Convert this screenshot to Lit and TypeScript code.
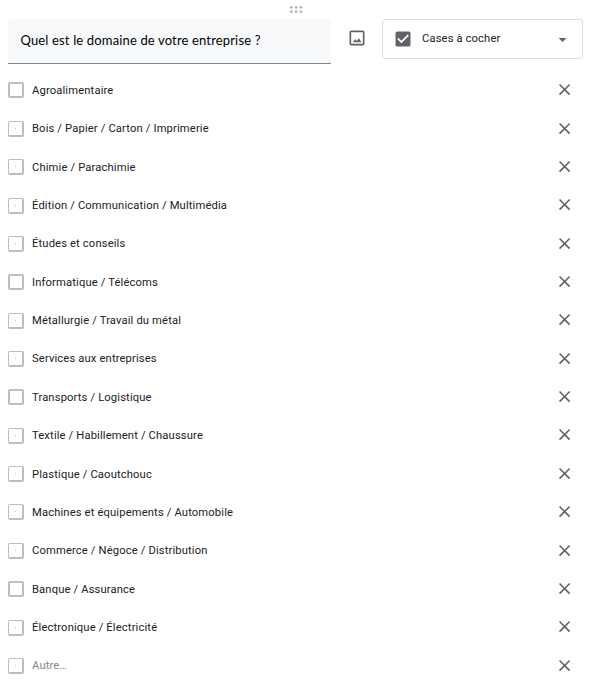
import { LitElement, html, css } from "lit";
import { customElement, property } from "lit/decorators.js";
import { classMap } from "lit/directives/class-map.js";

interface Option {
  label: string;
  dot?: boolean;
  other?: boolean;
}

const OPTIONS: Option[] = [
  { label: "Agroalimentaire" },
  { label: "Bois / Papier / Carton / Imprimerie", dot: true },
  { label: "Chimie / Parachimie", dot: true },
  { label: "Édition / Communication / Multimédia", dot: true },
  { label: "Études et conseils", dot: true },
  { label: "Informatique / Télécoms" },
  { label: "Métallurgie / Travail du métal", dot: true },
  { label: "Services aux entreprises", dot: true },
  { label: "Transports / Logistique" },
  { label: "Textile / Habillement / Chaussure", dot: true },
  { label: "Plastique / Caoutchouc", dot: true },
  { label: "Machines et équipements / Automobile", dot: true },
  { label: "Commerce / Négoce / Distribution", dot: true },
  { label: "Banque / Assurance" },
  { label: "Électronique / Électricité", dot: true },
  { label: "Autre…", dot: true, other: true },
];

@customElement("option-row")
export class OptionRow extends LitElement {
  @property({ attribute: false }) option!: Option;

  static styles = css`
    :host {
      display: flex;
      align-items: center;
      height: 38.36px;
      padding: 0 24px 0 8px;
    }
    .box {
      box-sizing: border-box;
      display: flex;
      align-items: center;
      justify-content: center;
      width: 16px;
      height: 16px;
      margin-right: 8px;
      border: 2px solid #bdbdbd;
      border-radius: 2px;
    }
    .box.dot {
      border-width: 1px 2px 2px 1px;
    }
    .box.dot::after {
      content: "";
      width: 1px;
      height: 1px;
      background: #bdbdbd;
    }
    .label {
      flex: 1;
      padding-top: 1px;
      font: 11.2px/16px Roboto, sans-serif;
      letter-spacing: 0.15px;
      color: #202124;
      white-space: nowrap;
    }
    .label.other {
      color: #80868b;
    }
    svg {
      width: 19.2px;
      height: 19.2px;
      margin: 0 -2px 1.4px 0;
      fill: #5f6368;
    }
  `;

  render() {
    const { label, dot = false, other = false } = this.option;
    return html`
      <span class=${classMap({ box: true, dot })}></span>
      <span class=${classMap({ label: true, other })}>${label}</span>
      <svg viewBox="0 0 24 24">
        <path d="M19 6.41L17.59 5 12 10.59 6.41 5 5 6.41 10.59 12 5 17.59 6.41 19 12 13.41 17.59 19 19 17.59 13.41 12z"/>
      </svg>
    `;
  }
}

@customElement("app-root")
export class AppRoot extends LitElement {
  static styles = css`
    :host {
      display: block;
      box-sizing: border-box;
      height: 687px;
      overflow: hidden;
      background: #fff;
    }
    .handle {
      display: flex;
      justify-content: center;
      box-sizing: border-box;
      height: 19px;
      padding: 5px 4px 0 0;
    }
    .handle svg {
      width: 14px;
      height: 9px;
      fill: #b4b4b4;
    }
    .head {
      display: flex;
      align-items: flex-start;
      height: 52.3px;
      padding-left: 8px;
    }
    .question {
      box-sizing: border-box;
      width: 323px;
      height: 45px;
      padding: 11px 12.5px;
      border-bottom: 1px solid #80868b;
      border-radius: 3px 3px 0 0;
      background: #f8f9fa;
      font: 13px/20px Lato, sans-serif;
      letter-spacing: 0.15px;
      color: #000;
      white-space: nowrap;
    }
    .icon {
      width: 20px;
      height: 20px;
      fill: #5f6368;
    }
    .image {
      margin: 9px 15.5px 0 15.5px;
    }
    .select {
      box-sizing: border-box;
      display: flex;
      align-items: center;
      width: 201px;
      height: 40px;
      padding: 0 10px 1px 9.5px;
      border: 1px solid #dadce0;
      border-radius: 3px;
    }
    .select span {
      flex: 1;
      margin-left: 9.5px;
      font: 11.2px/16px Roboto, sans-serif;
      letter-spacing: 0.14px;
      color: #202124;
    }
    .arrow {
      width: 19.2px;
      height: 19.2px;
      margin-top: 2px;
    }
  `;

  render() {
    return html`
      <div class="handle">
        <svg viewBox="0 0 14 9">
          <circle cx="2.3" cy="2.3" r="1.35"/><circle cx="7.1" cy="2.3" r="1.35"/><circle cx="11.900" cy="2.3" r="1.35"/>
          <circle cx="2.3" cy="6.600" r="1.35"/><circle cx="7.1" cy="6.600" r="1.35"/><circle cx="11.900" cy="6.600" r="1.35"/>
        </svg>
      </div>
      <div class="head">
        <div class="question">Quel est le domaine de votre entreprise ?</div>
        <svg class="icon image" viewBox="0 0 24 24">
          <path d="M19 5v14H5V5h14m0-2H5c-1.1 0-2 .9-2 2v14c0 1.1.9 2 2 2h14c1.1 0 2-.9 2-2V5c0-1.1-.9-2-2-2zM14.200 12.300l-2.600 3.300-1.900-2.200L7 17h10.500z"/>
        </svg>
        <div class="select">
          <svg class="icon" viewBox="0 0 24 24">
            <path d="M19 3H5c-1.11 0-2 .9-2 2v14c0 1.1.89 2 2 2h14c1.11 0 2-.9 2-2V5c0-1.1-.89-2-2-2zm-9 14l-5-5 1.410-1.410L10 14.170l7.590-7.590L19 8l-9 9z"/>
          </svg>
          <span>Cases à cocher</span>
          <svg class="icon arrow" viewBox="0 0 24 24"><path d="M7 10l5 5 5-5z"/></svg>
        </div>
      </div>
      ${OPTIONS.map((o) => html`<option-row .option=${o}></option-row>`)}
    `;
  }
}
